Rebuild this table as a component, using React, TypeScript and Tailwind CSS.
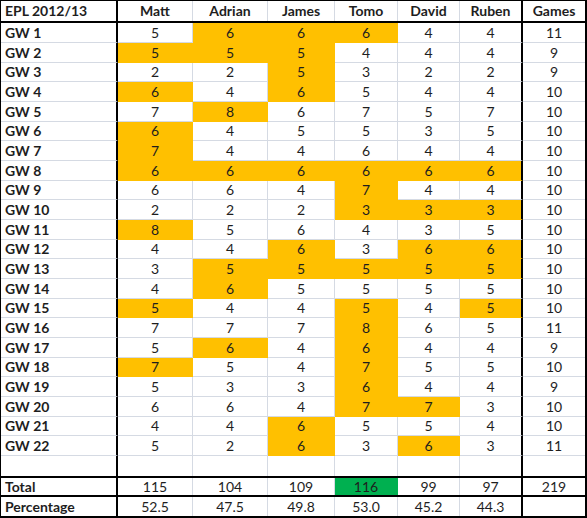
const players = ["Matt", "Adrian", "James", "Tomo", "David", "Ruben"];

// widths include the right-hand gridline of each cell
const colWidths = ["w-[75px]", "w-[75px]", "w-[67px]", "w-[63px]", "w-[62px]", "w-[63px]"];

type Score = [number, boolean];

// [value, highlighted] for each player, then games count
const weeks: { gw: number; scores: Score[]; games: number }[] = [
  { gw: 1, scores: [[5, false], [6, true], [6, true], [6, true], [4, false], [4, false]], games: 11 },
  { gw: 2, scores: [[5, true], [5, true], [5, true], [4, false], [4, false], [4, false]], games: 9 },
  { gw: 3, scores: [[2, false], [2, false], [5, true], [3, false], [2, false], [2, false]], games: 9 },
  { gw: 4, scores: [[6, true], [4, false], [6, true], [5, false], [4, false], [4, false]], games: 10 },
  { gw: 5, scores: [[7, false], [8, true], [6, false], [7, false], [5, false], [7, false]], games: 10 },
  { gw: 6, scores: [[6, true], [4, false], [5, false], [5, false], [3, false], [5, false]], games: 10 },
  { gw: 7, scores: [[7, true], [4, false], [4, false], [6, false], [4, false], [4, false]], games: 10 },
  { gw: 8, scores: [[6, true], [6, true], [6, true], [6, true], [6, true], [6, true]], games: 10 },
  { gw: 9, scores: [[6, false], [6, false], [4, false], [7, true], [4, false], [4, false]], games: 10 },
  { gw: 10, scores: [[2, false], [2, false], [2, false], [3, true], [3, true], [3, true]], games: 10 },
  { gw: 11, scores: [[8, true], [5, false], [6, false], [4, false], [3, false], [5, false]], games: 10 },
  { gw: 12, scores: [[4, false], [4, false], [6, true], [3, false], [6, true], [6, true]], games: 10 },
  { gw: 13, scores: [[3, false], [5, true], [5, true], [5, true], [5, true], [5, true]], games: 10 },
  { gw: 14, scores: [[4, false], [6, true], [5, false], [5, false], [5, false], [5, false]], games: 10 },
  { gw: 15, scores: [[5, true], [4, false], [4, false], [5, true], [4, false], [5, true]], games: 10 },
  { gw: 16, scores: [[7, false], [7, false], [7, false], [8, true], [6, false], [5, false]], games: 11 },
  { gw: 17, scores: [[5, false], [6, true], [4, false], [6, true], [4, false], [4, false]], games: 9 },
  { gw: 18, scores: [[7, true], [5, false], [4, false], [7, true], [5, false], [5, false]], games: 10 },
  { gw: 19, scores: [[5, false], [3, false], [3, false], [6, true], [4, false], [4, false]], games: 9 },
  { gw: 20, scores: [[6, false], [6, false], [4, false], [7, true], [7, true], [3, false]], games: 10 },
  { gw: 21, scores: [[4, false], [4, false], [6, true], [5, false], [5, false], [4, false]], games: 10 },
  { gw: 22, scores: [[5, false], [2, false], [6, true], [3, false], [6, true], [3, false]], games: 11 },
];

const totals = ["115", "104", "109", "116", "99", "97"];
const percents = ["52.5", "47.5", "49.8", "53.0", "45.2", "44.3"];

// excel zoom makes rows ~19.65px, so alternate 20/20/19
const rowHeights = ["h-[20px]", "h-[20px]", "h-[19px]"];

const App = () => {
  return (
    <div className="w-[587px] bg-white text-[14px] leading-none text-[#1e1e1e] font-['Lato','Liberation_Sans',sans-serif]">
      <div className="flex flex-col border-l border-t border-r-2 border-b-2 border-black">
        {/* header */}
        <div className="flex h-[22px] border-b-2 border-black font-bold">
          <div className="w-[117px] border-r-2 border-black pl-[4px] flex items-center">EPL 2012/13</div>
          {players.map((p, i) => (
            <div
              key={p}
              className={`${colWidths[i]} flex items-center justify-center ${i === 5 ? "border-r-2 border-black" : "border-r border-[#d5dae3]"}`}
            >
              {p}
            </div>
          ))}
          <div className="w-[62px] flex items-center justify-center">Games</div>
        </div>

        {/* game weeks */}
        {weeks.map((w, r) => (
          <div key={w.gw} className={`flex ${rowHeights[r % 3]}`}>
            <div className="w-[117px] border-r-2 border-b border-r-black border-b-[#d5dae3] pl-[4px] flex items-center font-bold">
              GW {w.gw}
            </div>
            {w.scores.map(([v, hi], i) => (
              <div
                key={i}
                className={`${colWidths[i]} flex items-center justify-center border-b ${
                  hi ? "bg-[#ffc000] border-b-[#ffc000]" : "border-b-[#d5dae3]"
                } ${i === 5 ? "border-r-2 border-r-black" : hi ? "border-r border-r-[#ffc000]" : "border-r border-r-[#d5dae3]"}`}
              >
                {v}
              </div>
            ))}
            <div className="w-[62px] flex items-center justify-center border-b border-[#d5dae3]">{w.games}</div>
          </div>
        ))}

        {/* blank row */}
        <div className="flex h-[20px]">
          <div className="w-[117px] border-r-2 border-black" />
          {players.map((p, i) => (
            <div
              key={p}
              className={`${colWidths[i]} ${i === 5 ? "border-r-2 border-black" : "border-r border-[#d5dae3]"}`}
            />
          ))}
          <div className="w-[62px]" />
        </div>

        {/* totals */}
        <div className="flex h-[19px] border-t-2 border-black">
          <div className="w-[117px] border-r-2 border-black pl-[4px] flex items-center font-bold">Total</div>
          {totals.map((t, i) => (
            <div
              key={i}
              className={`${colWidths[i]} flex items-center justify-center ${i === 3 ? "bg-[#00b050]" : ""} ${
                i === 5 ? "border-r-2 border-black" : i === 3 ? "border-r border-[#00b050]" : "border-r border-[#d5dae3]"
              }`}
            >
              {t}
            </div>
          ))}
          <div className="w-[62px] flex items-center justify-center">219</div>
        </div>

        <div className="flex h-[21px] border-t-2 border-black">
          <div className="w-[117px] border-r-2 border-black pl-[4px] flex items-center font-bold">Percentage</div>
          {percents.map((t, i) => (
            <div
              key={i}
              className={`${colWidths[i]} flex items-center justify-center ${i === 5 ? "border-r-2 border-black" : "border-r border-[#d5dae3]"}`}
            >
              {t}
            </div>
          ))}
          <div className="w-[62px]" />
        </div>
      </div>
    </div>
  );
};

export default App;
